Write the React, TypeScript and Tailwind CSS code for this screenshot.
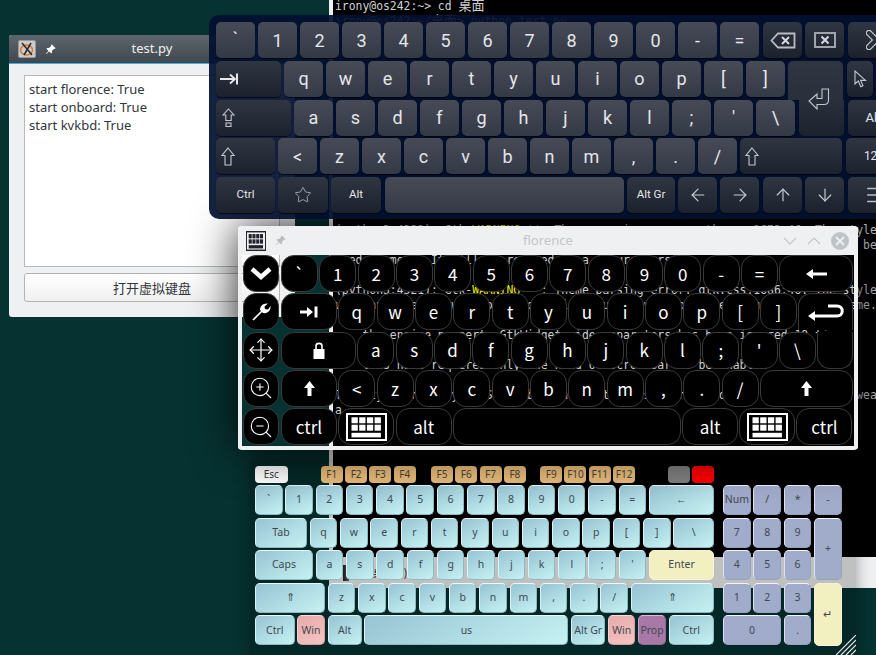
import type { ReactNode } from "react";
import { ArrowDown, ArrowLeft, ArrowRight, ArrowUp, Menu, Star, ZoomIn, ZoomOut, Move } from "lucide-react";
import { BsPinAngleFill } from "react-icons/bs";

const termLines = [
  "irony@os242:~> cd 桌面",
  "irony@os242:~/桌面> python test.py",
  "", "", "", "", "", "", "", "", "", "", "", "", "",
  "(python3:4321): Gtk-WARNING **: Theme parsing error: gtk.css:1673:46: The style",
  "property GtkButton:child-displacement-x is deprecated and, really, shouldn't be",
  "used anymore. It will be removed in a future version",
  "",
  "(python3:4321): Gtk-WARNING **: Theme parsing error: gtk.css:1686:46: The style",
  "used anymore. It will be removed in a future version. Please update your theme.",
  "",
  "    the engine property GtkWidget:wide-separators has been ignored 18 times",
  "",
  "    this name requires only one kind of scrollbar to be enabled",
  "",
  "The style property GtkStatusbar:shadow-type is deprecated and will be gone, wea",
  "a",
];

// onboard keyboard (the dark navy one at the top)
function OnKey({ w = "w-[39px]", dark, className = "", children }: { w?: string; dark?: boolean; className?: string; children?: ReactNode }) {
  return (
    <div
      className={`${w} ${className} h-[36px] shrink-0 rounded-[5px] flex items-center justify-center text-[#e4e6ea] shadow-[0_1px_1px_rgba(0,0,0,0.7)] ${
        dark ? "bg-[linear-gradient(#2f3541,#1c212e)]" : "bg-[linear-gradient(#464b56,#343946)]"
      }`}
    >
      {children}
    </div>
  );
}

const hollow = { fill: "none", stroke: "#c3c7cc", strokeWidth: 1.1 };

function Onboard() {
  return (
    <div className="absolute left-[209px] top-[15px] w-[720px] h-[204px] rounded-[10px] bg-[#021030]/[0.93] pl-[7px] pt-[7px] flex flex-col gap-[2.75px] font-['Roboto',sans-serif] text-[18px]">
      <div className="flex gap-[3px]">
        {"`1234567890-=".split("").map((k) => (
          <OnKey key={k} className={k === "`" ? "pb-1" : ""}>
            {k}
          </OnKey>
        ))}
        <OnKey dark className="ml-[1px]">
          <svg width="26" height="17" viewBox="0 0 26 17">
            <path d="M1.5 8.5 L8 1.5 H24.5 V15.5 H8 Z" fill="none" stroke="#b9bdc2" strokeWidth="1.8" />
            <path d="M12 5 L19 12 M19 5 L12 12" stroke="#d5d8dc" strokeWidth="2" />
          </svg>
        </OnKey>
        <OnKey dark>
          <svg width="22" height="16" viewBox="0 0 22 16">
            <rect x="1" y="1" width="20" height="14" fill="none" stroke="#9fa4aa" strokeWidth="2" />
            <path d="M7.5 4.5 L14.5 11.5 M14.5 4.5 L7.5 11.5" stroke="#d5d8dc" strokeWidth="2" />
          </svg>
        </OnKey>
        <OnKey dark w="w-[56px]" className="ml-[1px]">
          <svg width="20" height="20" viewBox="0 0 20 20">
            <path d="M3 3 L17 17 M17 3 L3 17" stroke="#c3c7cc" strokeWidth="6.5" strokeLinecap="round" />
            <path d="M3 3 L17 17 M17 3 L3 17" stroke="#2a2f3b" strokeWidth="4" strokeLinecap="round" />
          </svg>
        </OnKey>
      </div>

      <div className="flex gap-[3px] h-[36px] items-start">
        <OnKey dark w="w-[65px]" className="justify-start pl-[4px]">
          <svg width="18" height="12" viewBox="0 0 18 12">
            <path d="M0 6 H15 M10 1.5 L15 6 L10 10.5" fill="none" stroke="#e6e8ea" strokeWidth="1.8" />
            <path d="M17 0.5 V11.5" stroke="#e6e8ea" strokeWidth="2" />
          </svg>
        </OnKey>
        {"qwertyuiop[]".split("").map((k) => (
          <OnKey key={k}>{k}</OnKey>
        ))}
        <div className="w-[55px] h-[39px] shrink-0 rounded-t-[5px] bg-[linear-gradient(#2f3541,#2a2f3c)] relative">
          <svg className="absolute left-[20px] top-[27px]" width="22" height="22" viewBox="0 0 22 22" {...hollow}>
            <path d="M14 1 H20.5 V12 Q20.5 16.5 16 16.5 H9 V21 L1 13 L9 6 V10.5 H14 Z" />
          </svg>
        </div>
        <OnKey dark w="w-[26px]" className="ml-[1px]">
          <svg width="13" height="18" viewBox="0 0 13 18" {...hollow}>
            <path d="M1 1 V14 L4.3 11 L6.8 16.8 L9 15.8 L6.6 10.4 H11.5 Z" />
          </svg>
        </OnKey>
        <OnKey dark />
      </div>

      <div className="flex gap-[3px]">
        <OnKey dark w="w-[75px]" className="justify-start pl-[6px]">
          <svg width="13" height="19" viewBox="0 0 13 19" {...hollow}>
            <path d="M6.5 1 L12 7 H9.2 V12.5 H3.8 V7 H1 Z" />
            <rect x="4" y="15" width="5" height="3.5" />
          </svg>
        </OnKey>
        {"asdfghjkl;'\\".split("").map((k) => (
          <OnKey key={k}>{k}</OnKey>
        ))}
        <div className="w-[45px] h-[36px] shrink-0 rounded-b-[5px] ml-[0.5px] bg-[linear-gradient(#2a2f3c,#1c212e)]" />
        <OnKey dark w="w-[52px]" className="ml-[1px] text-[13px] text-[#d8dade]">
          Ab
        </OnKey>
      </div>

      <div className="flex gap-[3px]">
        <OnKey dark w="w-[59px]" className="justify-start pl-[5px]">
          <svg width="14" height="19" viewBox="0 0 14 19" {...hollow}>
            <path d="M7 1 L13 8.5 H10 V18 H4 V8.5 H1 Z" />
          </svg>
        </OnKey>
        {"<zxcvbnm,./".split("").map((k) => (
          <OnKey key={k}>{k}</OnKey>
        ))}
        <OnKey dark w="w-[102px]" className="justify-start pl-[5px]">
          <svg width="14" height="19" viewBox="0 0 14 19" {...hollow}>
            <path d="M7 1 L13 8.5 H10 V18 H4 V8.5 H1 Z" />
          </svg>
        </OnKey>
        <OnKey dark w="w-[56px]" className="ml-[1px] text-[12px] text-[#d8dade]">
          123
        </OnKey>
      </div>

      <div className="flex gap-[3px]">
        <OnKey dark w="w-[59px]" className="text-[11.5px] text-[#d8dade]">
          Ctrl
        </OnKey>
        <OnKey dark w="w-[50px]">
          <Star size={18} strokeWidth={1} color="#c3c7cc" />
        </OnKey>
        <OnKey dark w="w-[50px]" className="text-[11.5px] text-[#d8dade]">
          Alt
        </OnKey>
        <OnKey w="w-[239px]" className="ml-[1px]" />
        <OnKey dark w="w-[48px]" className="text-[11.5px] text-[#d8dade]">
          Alt Gr
        </OnKey>
        <OnKey dark>
          <ArrowLeft size={20} strokeWidth={1.4} color="#c9cdd1" />
        </OnKey>
        <OnKey dark>
          <ArrowRight size={20} strokeWidth={1.4} color="#c9cdd1" />
        </OnKey>
        <OnKey dark className="ml-[1px]">
          <ArrowUp size={20} strokeWidth={1.4} color="#c9cdd1" />
        </OnKey>
        <OnKey dark>
          <ArrowDown size={20} strokeWidth={1.4} color="#c9cdd1" />
        </OnKey>
        <OnKey dark w="w-[54px]" className="ml-[1px]">
          <Menu size={22} strokeWidth={1.6} color="#b9bdc2" />
        </OnKey>
      </div>
    </div>
  );
}

function KeyboardIcon({ className, fg, bg }: { className?: string; fg: string; bg: string }) {
  return (
    <svg className={className} viewBox="0 0 41 28" preserveAspectRatio="none">
      <rect x="1" y="1" width="39" height="26" fill={bg} stroke={fg} strokeWidth="2" />
      {[5.5, 13.2, 20.9, 28.6].map((x) => (
        <g key={x}>
          <rect x={x} y="4.3" width="6.3" height="6" fill={fg} />
          <rect x={x} y="11.7" width="6.3" height="6" fill={fg} />
        </g>
      ))}
      <rect x="5.5" y="19.8" width="29.4" height="4.6" fill={fg} />
    </svg>
  );
}

// florence keys: black, rounded, gaps show whatever is behind
function FKey({ w = "w-[37px]", className = "", children }: { w?: string; className?: string; children?: ReactNode }) {
  return (
    <div className={`${w} ${className} h-[37px] shrink-0 bg-black border border-[#3a3a3a] rounded-[13px] flex items-center justify-center text-white`}>
      {children}
    </div>
  );
}

function Florence() {
  return (
    <div className="absolute left-[238px] top-[226px] w-[620px] h-[224px] rounded-[4px] border-[4px] border-t-0 border-[#eff0f1] shadow-[0_0_45px_rgba(0,0,0,0.85)] flex flex-col">
      <div className="h-[29px] -mx-[4px] bg-[#eff0f1] rounded-t-[4px] flex items-center relative shrink-0">
        <KeyboardIcon className="w-[20px] h-[20px] ml-[8px]" fg="#20242a" bg="#eff0f1" />
        <BsPinAngleFill className="ml-[9px] text-[#b9bec3]" size={11} />
        <span className="absolute left-[285px] font-['Noto_Sans',sans-serif] text-[13px] text-[#c3c7ca]">florence</span>
        <div className="ml-auto mr-[9px] flex items-center gap-[10px]">
          <svg width="14" height="8" viewBox="0 0 14 8" fill="none" stroke="#c3c7ca" strokeWidth="1.2">
            <path d="M1 1 L7 7 L13 1" />
          </svg>
          <svg width="14" height="8" viewBox="0 0 14 8" fill="none" stroke="#c3c7ca" strokeWidth="1.2">
            <path d="M1 7 L7 1 L13 7" />
          </svg>
          <svg width="18" height="18" viewBox="0 0 18 18">
            <circle cx="9" cy="9" r="9" fill="#c0c3c6" />
            <path d="M5 5 L13 13 M13 5 L5 13" stroke="#eff0f1" strokeWidth="1.8" />
          </svg>
        </div>
      </div>
      <div className="flex gap-[2px] pl-[1px] font-['Noto_Sans_CJK_SC',sans-serif] text-[17px]">
        <div className="flex flex-col gap-[1.33px]">
          <FKey w="w-[36px]">
            <svg width="22" height="13" viewBox="0 0 22 13" fill="none" stroke="white" strokeWidth="4.5">
              <path d="M2 2 L11 10 L20 2" />
            </svg>
          </FKey>
          <FKey w="w-[36px]">
            <svg width="20" height="20" viewBox="0 0 20 20">
              <path d="M2 18 L11 9" stroke="white" strokeWidth="1.6" />
              <path d="M9 8 C9 4 12 1 17 1.5 L13.5 4.5 L14 7 L17 7.5 L19.5 4 C20 8 17 12 12 11 Z" fill="white" />
            </svg>
          </FKey>
          <FKey w="w-[36px]">
            <Move size={26} strokeWidth={1.1} color="white" />
          </FKey>
          <FKey w="w-[36px]">
            <ZoomIn size={26} strokeWidth={1} color="white" />
          </FKey>
          <FKey w="w-[36px]">
            <ZoomOut size={26} strokeWidth={1} color="white" />
          </FKey>
        </div>

        <div className="flex flex-col gap-[1.33px]">
          <div className="flex gap-[1.33px]">
            {"`1234567890-=".split("").map((k) => (
              <FKey key={k}>{k}</FKey>
            ))}
            <FKey w="w-[74px]">
              <svg width="21" height="10" viewBox="0 0 21 10" fill="white">
                <path d="M0 5 L7 0 V3.5 H21 V6.5 H7 V10 Z" />
              </svg>
            </FKey>
          </div>
          <div className="flex gap-[1.33px]">
            <FKey w="w-[56px]">
              <svg width="18" height="12" viewBox="0 0 18 12" fill="white">
                <path d="M0 4.5 H7 V1 L13 6 L7 11 V7.5 H0 Z" />
                <rect x="14.5" y="0.5" width="3" height="11" />
              </svg>
            </FKey>
            {"qwertyuiop[]".split("").map((k) => (
              <FKey key={k}>{k}</FKey>
            ))}
            <FKey w="w-[55px]" className="border-b-0 rounded-b-none">
              <svg width="36" height="18" viewBox="0 0 36 18" fill="none" stroke="white" strokeWidth="3">
                <path d="M3 13 H29 C36 13 36 3 29 3 H20" />
                <path d="M0 13 L7 8 V18 Z" fill="white" stroke="none" />
              </svg>
            </FKey>
          </div>
          <div className="flex gap-[1.33px]">
            <FKey w="w-[75px]">
              <svg width="12" height="17" viewBox="0 0 12 17">
                <rect x="0.5" y="7" width="11" height="10" fill="white" />
                <path d="M3 7 V4 C3 0.5 9 0.5 9 4 V7" fill="none" stroke="white" strokeWidth="1.6" />
              </svg>
            </FKey>
            {"asdfghjkl;'\\".split("").map((k) => (
              <FKey key={k}>{k}</FKey>
            ))}
            <FKey w="w-[36px]" className="border-t-0 rounded-t-none" />
          </div>
          <div className="flex gap-[1.33px]">
            <FKey w="w-[56px]">
              <svg width="11" height="15" viewBox="0 0 11 15" fill="white">
                <path d="M5.5 0 L11 7 H7.5 V15 H3.5 V7 H0 Z" />
              </svg>
            </FKey>
            {"<zxcvbnm,./".split("").map((k) => (
              <FKey key={k}>{k}</FKey>
            ))}
            <FKey w="w-[93px]">
              <svg width="11" height="15" viewBox="0 0 11 15" fill="white">
                <path d="M5.5 0 L11 7 H7.5 V15 H3.5 V7 H0 Z" />
              </svg>
            </FKey>
          </div>
          <div className="flex gap-[1.33px]">
            <FKey w="w-[56px]">ctrl</FKey>
            <FKey w="w-[56px]">
              <KeyboardIcon className="w-[41px] h-[28px]" fg="white" bg="black" />
            </FKey>
            <FKey w="w-[56px]">alt</FKey>
            <FKey w="w-[228px]" />
            <FKey w="w-[55.5px]">alt</FKey>
            <FKey w="w-[56px]">
              <KeyboardIcon className="w-[41px] h-[28px]" fg="white" bg="black" />
            </FKey>
            <FKey w="w-[56px]">ctrl</FKey>
          </div>
        </div>
      </div>
    </div>
  );
}

const kColors = {
  blue: "bg-[linear-gradient(150deg,#97c3d3,#c6f2f3)] border-t-[#eafafc] border-l-[#dff3f6] border-b-[#8fb9c2] border-r-[#8fb9c2]",
  pink: "bg-[linear-gradient(150deg,#e8a9aa,#f5c5c3)] border-t-[#f6dcdc] border-l-[#f0d0d0] border-b-[#d89c9c] border-r-[#d89c9c]",
  purple: "bg-[#a878a6] border-t-[#e0b8e0] border-l-[#c8a0c8] border-b-[#946a94] border-r-[#946a94]",
  yellow: "bg-[#f2efc1] border-[#f6f4d4]",
  num: "bg-[#a1abca] border-t-[#f4f5fa] border-l-[#e0e3ef] border-b-[#98a2c0] border-r-[#98a2c0]",
};

function KKey({ w = "w-[27.5px]", c = "blue", h = "h-[30px]", children }: { w?: string; c?: keyof typeof kColors; h?: string; children?: ReactNode }) {
  return (
    <div className={`${w} ${h} ${kColors[c]} shrink-0 border rounded-[5px] flex items-center justify-center text-[#3f4a52]`}>{children}</div>
  );
}

function FnKey({ className = "", children }: { className?: string; children?: ReactNode }) {
  return (
    <div className={`${className} w-[22px] h-[16.5px] shrink-0 rounded-[4px] bg-[#eabd7a] flex items-center justify-center text-[10px] text-[#4a4438]`}>
      {children}
    </div>
  );
}

function Kvkbd() {
  return (
    <div className="absolute left-[250px] top-[460px] w-[606px] h-[200px] bg-black/20 shadow-[0_0_14px_rgba(0,0,0,0.35)]">
      <div className="ml-[5px] mt-[6px] flex items-start font-['Noto_Sans',sans-serif] text-[10.5px]">
        <div className="w-[459px] flex flex-col gap-[2.6px]">
          <div className="flex gap-[2.3px]">
            <div className="w-[33px] h-[16.5px] rounded-[4px] bg-white flex items-center justify-center text-[10px] text-[#333]">Esc</div>
            <FnKey className="ml-[31px]">F1</FnKey>
            <FnKey>F2</FnKey>
            <FnKey>F3</FnKey>
            <FnKey>F4</FnKey>
            <FnKey className="ml-[13px]">F5</FnKey>
            <FnKey>F6</FnKey>
            <FnKey>F7</FnKey>
            <FnKey>F8</FnKey>
            <FnKey className="ml-[12px]">F9</FnKey>
            <FnKey>F10</FnKey>
            <FnKey>F11</FnKey>
            <FnKey>F12</FnKey>
            <div className="ml-[31px] w-[22px] h-[16.5px] rounded-[4px] bg-[#808080]" />
            <div className="w-[22px] h-[16.5px] rounded-[4px] bg-[#ff0000]" />
          </div>
          <div className="flex gap-[2.8px]">
            {"`1234567890-=".split("").map((k) => (
              <KKey key={k}>{k}</KKey>
            ))}
            <KKey w="w-[65px]">←</KKey>
          </div>
          <div className="flex gap-[2.8px]">
            <KKey w="w-[52px]">Tab</KKey>
            {"qwertyuiop[]".split("").map((k) => (
              <KKey key={k}>{k}</KKey>
            ))}
            <KKey w="w-[40.6px]">\</KKey>
          </div>
          <div className="flex gap-[2.8px]">
            <KKey w="w-[58px]">Caps</KKey>
            {"asdfghjkl;'".split("").map((k) => (
              <KKey key={k}>{k}</KKey>
            ))}
            <KKey w="w-[65px]" c="yellow">
              Enter
            </KKey>
          </div>
          <div className="flex gap-[2.8px]">
            <KKey w="w-[70px]">⇑</KKey>
            {"zxcvbnm,./".split("").map((k) => (
              <KKey key={k}>{k}</KKey>
            ))}
            <KKey w="w-[83px]">⇑</KKey>
          </div>
          <div className="flex gap-[2.8px]">
            <KKey w="w-[39.5px]">Ctrl</KKey>
            <KKey c="pink">Win</KKey>
            <KKey w="w-[34px]">Alt</KKey>
            <KKey w="w-[204px]">us</KKey>
            <KKey w="w-[34px]">Alt Gr</KKey>
            <KKey c="pink">Win</KKey>
            <KKey c="purple">Prop</KKey>
            <KKey w="w-[45.4px]">Ctrl</KKey>
          </div>
        </div>

        <div className="ml-[9px] mt-[19px] grid grid-cols-[repeat(4,27.7px)] grid-rows-[repeat(5,30px)] gap-x-[2.7px] gap-y-[2.6px]">
          {["Num", "/", "*", "-", "7", "8", "9"].map((k) => (
            <KKey key={k} c="num" w="w-full">
              {k}
            </KKey>
          ))}
          <div className="row-span-2">
            <KKey c="num" w="w-full" h="h-[62.6px]">
              +
            </KKey>
          </div>
          {["4", "5", "6", "1", "2", "3"].map((k) => (
            <KKey key={k} c="num" w="w-full">
              {k}
            </KKey>
          ))}
          <div className="row-span-2 col-start-4 row-start-4">
            <KKey c="yellow" w="w-full" h="h-[63.5px]">
              ↵
            </KKey>
          </div>
          <div className="col-span-2">
            <KKey c="num" w="w-full">
              0
            </KKey>
          </div>
          <KKey c="num" w="w-full">
            .
          </KKey>
        </div>
      </div>
      <svg className="absolute right-0 bottom-[5px]" width="20" height="20" viewBox="0 0 20 20" stroke="#e8e8e8" strokeWidth="1.2">
        <path d="M0 20 L20 0 M5 20 L20 5 M10 20 L20 10 M15 20 L20 15" />
      </svg>
    </div>
  );
}

function TestWindow() {
  return (
    <div className="absolute left-[9px] top-[35px] w-[286px] h-[282px] rounded-[3px] overflow-hidden bg-[#eff0f1] flex flex-col font-['Noto_Sans',sans-serif]">
      <div className="h-[29px] shrink-0 bg-[linear-gradient(#5d666e,#3f484d)] border-b border-[#3daee9] flex items-center relative">
        <svg className="ml-[9px]" width="18" height="18" viewBox="0 0 18 18">
          <rect x="0.5" y="0.5" width="17" height="17" rx="1.5" fill="#c9cccd" stroke="#999" />
          <ellipse cx="8.5" cy="10" rx="6" ry="5" fill="none" stroke="#e0702a" strokeWidth="1.4" />
          <path d="M4 3 L14 15 M13 3 L6 15" stroke="#2a2a2a" strokeWidth="1.5" />
        </svg>
        <BsPinAngleFill className="ml-[9px] text-white" size={11} />
        <span className="absolute inset-x-0 text-center text-[13px] text-[#eff0f1]">test.py</span>
      </div>
      <div className="flex-1 px-[15px] pt-[11px] pb-[15px] flex flex-col gap-[6px]">
        <div className="h-[192px] bg-white border border-[#b8b8b8] pl-[4px] pt-[4px] text-[13px] leading-[18px] text-[#31363b]">
          <div>start florence: True</div>
          <div>start onboard: True</div>
          <div>start kvkbd: True</div>
        </div>
        <button className="h-[29px] rounded-[3px] border border-[#b4b4b4] bg-[linear-gradient(#ffffff,#f0f0f0)] font-['Noto_Sans_CJK_SC',sans-serif] text-[13px] text-[#31363b]">
          打开虚拟键盘
        </button>
      </div>
    </div>
  );
}

// the 桌面 in the shell lines is wider than the mono cell
function TermLine({ line }: { line: string }) {
  if (line.includes("Gtk-WARNING")) {
    const [before, after] = line.split("WARNING");
    return (
      <div className="whitespace-pre h-[15px]">
        {before}
        <span className="text-[#f0f000]">WARNING</span>
        {after}
      </div>
    );
  }
  if (line.includes("桌面")) {
    const [before, after] = line.split("桌面");
    return (
      <div className="whitespace-pre h-[15px]">
        {before}
        <span className="text-[13px]">桌面</span>
        {after}
      </div>
    );
  }
  return <div className="whitespace-pre h-[15px]">{line}</div>;
}

export default function App() {
  return (
    <div className="relative w-[876px] h-[655px] overflow-hidden bg-[#063231]">
      {/* light window peeking out under the terminal */}
      <div className="absolute left-[329px] top-[557px] w-[547px] h-[31px] bg-[#eff0f1] flex items-center">
        <div className="ml-[14px] h-[16px] w-[6px] bg-[linear-gradient(90deg,#222,#666)]" />
        <span className="ml-[24px] font-['Noto_Sans_CJK_SC',sans-serif] text-[11px] text-[#222]">桌面 ) )</span>
      </div>

      {/* terminal */}
      <div className="absolute left-[329px] top-0 w-[547px] h-[557px] bg-black border-l-[4px] border-[#eeeeee] overflow-hidden pl-[2px] font-['DejaVu_Sans_Mono','Noto_Sans_CJK_SC',monospace] text-[11.4px] leading-[15px] text-[#d0d0d0]">
        <div className="-mt-[2px]">
          {termLines.map((line, i) => (
            <TermLine key={i} line={line} />
          ))}
        </div>
      </div>

      <TestWindow />
      <Kvkbd />
      <Florence />
      <Onboard />
    </div>
  );
}
